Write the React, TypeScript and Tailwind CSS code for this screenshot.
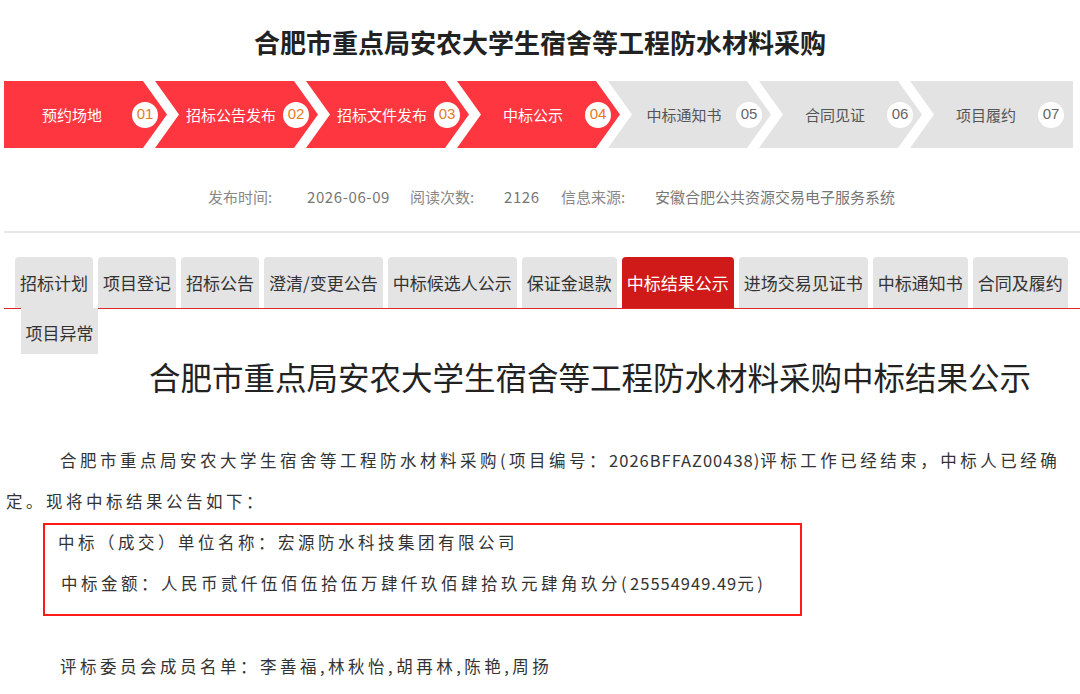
import React from "react";

interface Step {
  label: string;
  no: string;
  done: boolean;
}

const steps: Step[] = [
  { label: "预约场地", no: "01", done: true },
  { label: "招标公告发布", no: "02", done: true },
  { label: "招标文件发布", no: "03", done: true },
  { label: "中标公示", no: "04", done: true },
  { label: "中标通知书", no: "05", done: false },
  { label: "合同见证", no: "06", done: false },
  { label: "项目履约", no: "07", done: false },
];

const tabs = [
  "招标计划",
  "项目登记",
  "招标公告",
  "澄清/变更公告",
  "中标候选人公示",
  "保证金退款",
  "中标结果公示",
  "进场交易见证书",
  "中标通知书",
  "合同及履约",
];

const ACTIVE_TAB = "中标结果公示";

// chevron shapes, written out so tailwind picks them up
const FIRST_SHAPE = "[clip-path:polygon(0_0,139px_0,163px_50%,139px_100%,0_100%)]";
const MID_SHAPE = "[clip-path:polygon(0_0,139px_0,163px_50%,139px_100%,0_100%,24px_50%)]";
const LAST_SHAPE = "[clip-path:polygon(0_0,100%_0,100%_100%,0_100%,24px_50%)]";

const StepBar: React.FC = () => {
  return (
    <div className="mt-[24px] flex pl-[4px]">
      {steps.map((step, i) => {
        const shape = i === 0 ? FIRST_SHAPE : i === steps.length - 1 ? LAST_SHAPE : MID_SHAPE;
        return (
          <div
            key={step.no}
            className={`${shape} ${i === 0 ? "" : "-ml-[12px]"} ${
              step.done ? "bg-[#fd3640] text-white" : "bg-[#e3e3e3] text-[#555]"
            } flex h-[67px] w-[163px] shrink-0 items-center`}
          >
            <span
              className={`${i === 0 ? "pl-[8px]" : "pl-[24px]"} w-[128px] whitespace-nowrap text-center text-[15px] leading-[20px]`}
            >
              {step.label}
            </span>
            <span
              className={`flex h-[26px] w-[26px] items-center justify-center rounded-full bg-white font-['Liberation_Sans',sans-serif] text-[15px] ${
                step.done ? "text-[#e57a25]" : "text-[#666]"
              }`}
            >
              {step.no}
            </span>
          </div>
        );
      })}
    </div>
  );
};

const MetaRow: React.FC = () => (
  <div className="mt-[39px] flex pl-[208px] text-[15px] leading-[20px] text-[#888]">
    <span className="w-[99px]">发布时间:</span>
    <span className="w-[103px] tracking-[0.6px] text-[#777]">2026-06-09</span>
    <span className="w-[94px]">阅读次数:</span>
    <span className="w-[57px] tracking-[0.6px] text-[#777]">2126</span>
    <span className="w-[94px]">信息来源:</span>
    <span className="text-[#777]">安徽合肥公共资源交易电子服务系统</span>
  </div>
);

const Tabs: React.FC = () => (
  <div className="mt-[24px]">
    <div className="ml-[15px] flex gap-[5px]">
      {tabs.map((tab) => (
        <div
          key={tab}
          className={`h-[51px] whitespace-nowrap rounded-t-[4px] px-[5px] text-[17px] leading-[51px] ${
            tab === ACTIVE_TAB ? "bg-[#d01a19] text-white" : "bg-[#e4e4e4] text-[#333]"
          }`}
        >
          {tab}
        </div>
      ))}
    </div>
    <div className="ml-[4px] h-px bg-[#e0262b]" />
    <div className="-mt-px ml-[21px] h-[46px] w-[77px] bg-[#e4e4e4] text-center text-[17px] leading-[50px] text-[#333]">
      项目异常
    </div>
  </div>
);

export default function App() {
  return (
    <div className="w-[1080px] overflow-hidden bg-white pb-[20px] font-['Noto_Sans_CJK_SC',sans-serif]">
      <h1 className="pt-[27px] text-center text-[26px] font-bold leading-[30px] text-[#222]">
        合肥市重点局安农大学生宿舍等工程防水材料采购
      </h1>

      <StepBar />
      <MetaRow />
      <div className="ml-[4px] mt-[24px] h-[2px] bg-[#e8e8e8]" />
      <Tabs />

      <h2 className="mt-[2px] whitespace-nowrap pl-[149px] text-[31.5px] font-normal leading-[40px] text-[#222]">
        合肥市重点局安农大学生宿舍等工程防水材料采购中标结果公示
      </h2>

      <div className="text-[16.5px] leading-[41px] tracking-[3.5px] text-[#333]">
        <p className="mt-[44px] whitespace-nowrap pl-[6px] indent-[54px]">
          合肥市重点局安农大学生宿舍等工程防水材料采购(项目编号：
          <span className="tracking-[1px]">2026BFFAZ00438)</span>
          评标工作已经结束，中标人已经确
          <br />
          定。现将中标结果公告如下：
        </p>

        <div className="ml-[43px] mt-[1px] box-border h-[93px] w-[759px] border-2 border-[#ff1a1a] pl-[13px]">
          <div className="leading-[34px]">中标（成交）单位名称：宏源防水科技集团有限公司</div>
          <div className="ml-[3px] mt-[7px] leading-[34px]">
            中标金额：人民币贰仟伍佰伍拾伍万肆仟玖佰肆拾玖元肆角玖分(
            <span className="tracking-[1px]">25554949.49</span>元)
          </div>
        </div>

        <p className="mt-[30px] pl-[60px] leading-[40px]">评标委员会成员名单：李善福,林秋怡,胡再林,陈艳,周扬</p>
      </div>
    </div>
  );
}
